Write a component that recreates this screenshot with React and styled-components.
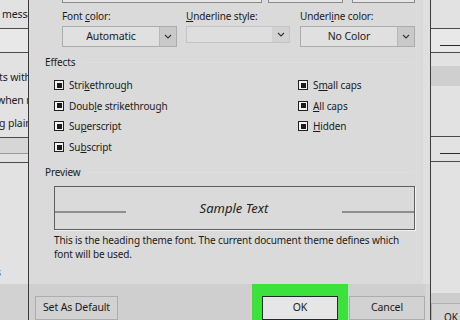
import React from "react";
import styled, { createGlobalStyle } from "styled-components";

const Global = createGlobalStyle`
  html, body { margin: 0; padding: 0; }
  body {
    width: 460px; height: 320px; overflow: hidden;
    background: #d9d9d9;
    font-family: "Noto Sans", "Open Sans", sans-serif;
    font-size: 10px;
    letter-spacing: -0.12px;
    color: #1a1a1a;
  }
`;

const Page = styled.div`
  display: flex;
  width: 460px;
  height: 320px;
  overflow: hidden;
`;

/* ---------- side windows ---------- */
const SideWin = styled.div`
  flex: 0 0 ${(p) => p.$w}px;
  display: flex;
  flex-direction: column;
  background: #e2e2e2;
  overflow: hidden;
`;

const SideRow = styled.div`
  flex: 0 0 ${(p) => p.$h}px;
  box-sizing: border-box;
  background: ${(p) => p.$bg || "transparent"};
  border-bottom: ${(p) => (p.$line ? `1px solid ${p.$line}` : "none")};
  display: flex;
  flex-direction: column;
  justify-content: ${(p) => p.$justify || "flex-start"};
  padding-top: ${(p) => p.$pt || 0}px;
  overflow: hidden;
`;

const SideText = styled.div`
  font-size: 10.5px;
  line-height: 23px;
  white-space: nowrap;
  margin-left: ${(p) => p.$ml || 0}px;
  color: ${(p) => p.$color || "#1a1a1a"};
`;

const ShortRule = styled.div`
  height: 1px;
  background: #2a2a2a;
  margin-left: ${(p) => p.$ml}px;
  margin-top: ${(p) => p.$mt}px;
`;

const SideButton = styled.div`
  margin-top: 10px;
  height: 26px;
  box-sizing: border-box;
  border-top: 1px solid #b0b0b0;
  border-left: 1px solid #b0b0b0;
  background: #d3d3d3;
  line-height: 26px;
  padding-left: 12px;
  white-space: nowrap;
`;

const Divider = styled.div`
  flex: 0 0 1px;
  background: #3c3c3c;
`;

/* ---------- dialog ---------- */
const Dialog = styled.div`
  flex: 0 0 401px;
  display: flex;
  flex-direction: column;
  background: #dadada;
`;

const Body = styled.div`
  flex: 1;
  display: flex;
  flex-direction: column;
  padding: 0 8px 0 16px;
  border-right: 7px solid #dfdfdf;
`;

const TopBoxes = styled.div`
  display: flex;
  height: 3px;
  margin-left: 17px;
`;

const TopBox = styled.div`
  flex: 0 0 ${(p) => p.$w}px;
  margin-right: ${(p) => p.$mr || 0}px;
  box-sizing: border-box;
  border: 1px solid #8a8a8a;
  border-top: none;
  background: #e6e6e6;
`;

const FieldRow = styled.div`
  display: flex;
  margin-left: 17px;
  margin-top: 6px;
`;

const Field = styled.div`
  display: flex;
  flex-direction: column;
  flex: 0 0 ${(p) => p.$w}px;
  margin-right: ${(p) => p.$mr || 0}px;
  gap: 3px;
`;

const Label = styled.div`
  line-height: 14px;
  white-space: nowrap;
`;

const Select = styled.div`
  display: flex;
  height: ${(p) => (p.$disabled ? 17 : 21)}px;
  box-sizing: border-box;
  border: 1px solid ${(p) => (p.$disabled ? "#c4c4c4" : "#acacac")};
  background: ${(p) => (p.$disabled ? "#dedede" : "#e0e0e0")};
`;

const SelectValue = styled.div`
  flex: 1;
  text-align: center;
  font-size: 10.5px;
  line-height: 19px;
`;

const SelectArrow = styled.div`
  flex: 0 0 16px;
  display: flex;
  align-items: center;
  justify-content: center;
  background: ${(p) => (p.$disabled ? "#d2d2d2" : "#c9c9c9")};
  border-left: 1px solid ${(p) => (p.$disabled ? "#d0d0d0" : "#b8b8b8")};
`;

const GroupLabel = styled.div`
  line-height: 14px;
  margin-top: ${(p) => p.$mt}px;
  display: flex;
  align-items: center;
  gap: 6px;
  &::after {
    content: "";
    flex: 1;
    height: 1px;
    background: #dedede;
  }
`;

const EffectsGrid = styled.div`
  display: grid;
  grid-template-columns: 244px 1fr;
  grid-template-rows: repeat(4, 20.6px);
  grid-auto-flow: column;
  margin: 6px 0 0 9px;
`;

const Check = styled.div`
  display: flex;
  align-items: center;
  gap: 5px;
  white-space: nowrap;
`;

const Box = styled.span`
  width: 10px;
  height: 10px;
  box-sizing: border-box;
  border: 1px solid #202020;
  background: #f2f2f2;
  display: flex;
  align-items: center;
  justify-content: center;
  &::after {
    content: "";
    width: 5px;
    height: 5px;
    background: #1c1c1c;
  }
`;

const PreviewBox = styled.div`
  margin: 7px 0 0 9px;
  width: 361px;
  height: 44px;
  box-sizing: border-box;
  border: 1px solid #5e5e5e;
  box-shadow: 1px 1px 0 #f3f3f3;
  display: flex;
  align-items: center;
  justify-content: space-between;
`;

const Rule = styled.div`
  flex: 0 0 ${(p) => p.$w}px;
  height: 2px;
  background: #8e8e8e;
  margin-top: 8px;
`;

const Sample = styled.div`
  font-style: italic;
  font-size: 13px;
  letter-spacing: 0;
  color: #222;
`;

const Note = styled.div`
  margin: 3px 0 0 9px;
  line-height: 14px;
  white-space: nowrap;
`;

const Footer = styled.div`
  flex: 0 0 33px;
  display: flex;
  align-items: flex-start;
  background: #cfcfcf;
  padding: 0 0 0 6px;
  border-right: 5px solid #d6d6d6;
`;

const Button = styled.div`
  margin-top: 12px;
  width: ${(p) => p.$w}px;
  height: 24px;
  box-sizing: border-box;
  border: 1px solid ${(p) => (p.$primary ? "#1f2a36" : "#adadad")};
  background: ${(p) => (p.$primary ? "#e6e6e6" : "#d2d2d2")};
  font-size: 10.5px;
  line-height: 20px;
  text-align: center;
  white-space: nowrap;
`;

const Spacer = styled.div`
  flex: 1;
`;

const Highlight = styled.div`
  align-self: stretch;
  background: #3be23b;
  padding: 0 10px;
  margin-right: 1px;
  display: flex;
  align-items: flex-start;
`;

const Chevron = () => (
  <svg width="8" height="5" viewBox="0 0 8 5">
    <path d="M1 1 L4 4 L7 1" fill="none" stroke="#333" strokeWidth="1.1" />
  </svg>
);

const Acc = styled.u`
  text-decoration-thickness: 1px;
  text-underline-offset: 1px;
`;

const effects = [
  <>Stri<Acc>k</Acc>ethrough</>,
  <>Doub<Acc>l</Acc>e strikethrough</>,
  <>Su<Acc>p</Acc>erscript</>,
  <>Su<Acc>b</Acc>script</>,
  <>S<Acc>m</Acc>all caps</>,
  <><Acc>A</Acc>ll caps</>,
  <><Acc>H</Acc>idden</>,
];

export default function App() {
  return (
    <>
      <Global />
      <Page>
        <SideWin $w={28}>
          <SideRow $h={29} $line="#4a4a4a" $justify="center">
            <SideText $ml={2}>messa</SideText>
          </SideRow>
          <SideRow $h={24} $line="#4a4a4a" $bg="#e8e8e8" />
          <SideRow $h={85} $line="#4a4a4a" $pt={13}>
            <SideText $ml={-1}>ts with</SideText>
            <SideText $ml={-3}>when r</SideText>
            <SideText $ml={-1}>g plain</SideText>
          </SideRow>
          <SideRow $h={16} $line="#9a9a9a" $bg="#d6d6d6" />
          <SideRow $h={9} $line="#4a4a4a" />
          <SideRow $h={121} $justify="flex-end">
            <SideText $ml={-4} $color="#2f4f8f">s</SideText>
          </SideRow>
          <SideRow $h={38} $bg="#d2d2d2" />
        </SideWin>
        <Divider />
        <Dialog>
          <Body>
            <TopBoxes>
              <TopBox $w={200} $mr={6} />
              <TopBox $w={75} $mr={9} />
              <TopBox $w={63} />
            </TopBoxes>
            <FieldRow>
              <Field $w={115} $mr={9}>
                <Label>
                  Font <Acc>c</Acc>olor:
                </Label>
                <Select>
                  <SelectValue>Automatic</SelectValue>
                  <SelectArrow>
                    <Chevron />
                  </SelectArrow>
                </Select>
              </Field>
              <Field $w={104} $mr={10}>
                <Label>
                  <Acc>U</Acc>nderline style:
                </Label>
                <Select $disabled>
                  <SelectValue />
                  <SelectArrow $disabled>
                    <Chevron />
                  </SelectArrow>
                </Select>
              </Field>
              <Field $w={115}>
                <Label>
                  Underl<Acc>i</Acc>ne color:
                </Label>
                <Select>
                  <SelectValue>No Color</SelectValue>
                  <SelectArrow>
                    <Chevron />
                  </SelectArrow>
                </Select>
              </Field>
            </FieldRow>
            <GroupLabel $mt={8}>Effects</GroupLabel>
            <EffectsGrid>
              {effects.map((e, i) => (
                <Check key={i}>
                  <Box />
                  <span>{e}</span>
                </Check>
              ))}
            </EffectsGrid>
            <GroupLabel $mt={8}>Preview</GroupLabel>
            <PreviewBox>
              <Rule $w={71} />
              <Sample>Sample Text</Sample>
              <Rule $w={72} />
            </PreviewBox>
            <Note>
              This is the heading theme font. The current document theme defines which
              <br />
              font will be used.
            </Note>
          </Body>
          <Footer>
            <Button $w={83}>Set As Default</Button>
            <Spacer />
            <Highlight>
              <Button $w={76} $primary>
                OK
              </Button>
            </Highlight>
            <Button $w={76}>Cancel</Button>
          </Footer>
        </Dialog>
        <Divider />
        <SideWin $w={29}>
          <SideRow $h={29} $line="#4a4a4a" />
          <SideRow $h={24} $line="#4a4a4a" $bg="#e8e8e8">
            <ShortRule $ml={9} $mt={16} />
          </SideRow>
          <SideRow $h={13} />
          <SideRow $h={20} $bg="#cfcfcf" />
          <SideRow $h={51} $line="#4a4a4a" />
          <SideRow $h={17}>
            <ShortRule $ml={9} $mt={16} />
          </SideRow>
          <SideRow $h={8} $line="#4a4a4a" />
          <SideRow $h={131} />
          <SideRow $h={27} $bg="#cdcdcd">
            <SideButton>OK</SideButton>
          </SideRow>
        </SideWin>
      </Page>
    </>
  );
}
